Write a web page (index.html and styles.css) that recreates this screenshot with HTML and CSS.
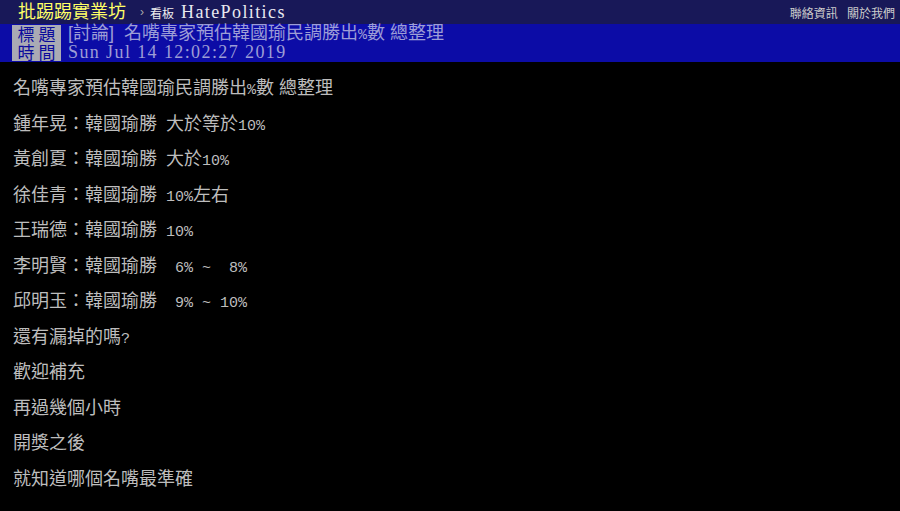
FILE: index.html
```html
<!DOCTYPE html>
<html lang="zh-Hant">
<head>
  <meta charset="UTF-8">
  <title>[討論] 名嘴專家預估韓國瑜民調勝出%數 總整理 - HatePolitics</title>
  <link rel="stylesheet" href="styles.css">
</head>
<body>
  <div class="topbar">
    <a class="brand" href="#">批踢踢實業坊</a>
    <span class="sep">›</span>
    <span class="board-label">看板</span>
    <a class="board" href="#">HatePolitics</a>
    <div class="right-links">
      <a href="#">聯絡資訊</a>
      <a href="#">關於我們</a>
    </div>
  </div>

  <div class="meta">
    <div class="meta-line">
      <span class="meta-tag">標題</span>
      <span class="meta-value">[討論]  名嘴專家預估韓國瑜民調勝出<span class="h">%</span>數 總整理</span>
    </div>
    <div class="meta-line">
      <span class="meta-tag">時間</span>
      <span class="meta-value date">Sun Jul 14 12:02:27 2019</span>
    </div>
  </div>

  <div class="main-content">
    <p>名嘴專家預估韓國瑜民調勝出<span class="h">%</span>數 總整理</p>
    <p>鍾年晃：韓國瑜勝<span class="h"> </span>大於等於<span class="h">10%</span></p>
    <p>黃創夏：韓國瑜勝<span class="h"> </span>大於<span class="h">10%</span></p>
    <p>徐佳青：韓國瑜勝<span class="h"> 10%</span>左右</p>
    <p>王瑞德：韓國瑜勝<span class="h"> 10%</span></p>
    <p>李明賢：韓國瑜勝<span class="h">  6% ~  8%</span></p>
    <p>邱明玉：韓國瑜勝<span class="h">  9% ~ 10%</span></p>
    <p>還有漏掉的嗎<span class="h">?</span></p>
    <p>歡迎補充</p>
    <p>再過幾個小時</p>
    <p>開獎之後</p>
    <p>就知道哪個名嘴最準確</p>
  </div>
</body>
</html>
```

FILE: styles.css
```css
body {
  margin: 0;
  background-color: #000;
  color: #bdbdbd;
  font-family: "Liberation Sans", "Noto Sans CJK TC", sans-serif;
}
a {
  text-decoration: none;
}

.topbar {
  display: flex;
  align-items: center;
  height: 24px;
  padding-left: 18px;
  background-color: #181858;
}
.brand {
  color: #ffff66;
  font-size: 18px;
  line-height: 24px;
}
.sep {
  color: #aaa;
  font-size: 12px;
  margin: 0 6px 0 14px;
}
.board-label {
  color: #eee;
  font-size: 12px;
  margin-right: 7px;
}
.board {
  color: #e8e8f0;
  font-family: "Liberation Serif", "Noto Sans CJK TC", serif;
  font-size: 18px;
  letter-spacing: 1.4px;
}
.right-links {
  margin-left: auto;
  padding-right: 5px;
  font-size: 12px;
}
.right-links a {
  color: #ccc;
  margin-left: 6px;
}

.meta {
  background-color: #0c0ca6;
  padding: 1px 0 1px 12px;
}
.meta-line {
  display: flex;
  align-items: center;
  height: 18px;
}
.meta-tag {
  width: 49px;
  height: 18px;
  background-color: #aaaab4;
  color: #0b0b9c;
  font-family: "Noto Sans CJK TC", sans-serif;
  font-size: 17px;
  line-height: 18px;
  text-align: center;
  letter-spacing: 4px;
  text-indent: 4px;
}
.meta-value {
  color: #9d9dd6;
  font-size: 18px;
  line-height: 18px;
  padding-left: 7px;
  white-space: pre;
}
.meta-value.date {
  font-family: "Liberation Serif", serif;
  letter-spacing: 1.4px;
}

.main-content {
  padding: 9px 13px 0;
  font-size: 18px;
}
.main-content p {
  margin: 0;
  height: 35.5px;
  line-height: 35.5px;
  white-space: pre;
}
.h {
  font-family: "Liberation Mono", monospace;
  font-size: 15px;
}
```
